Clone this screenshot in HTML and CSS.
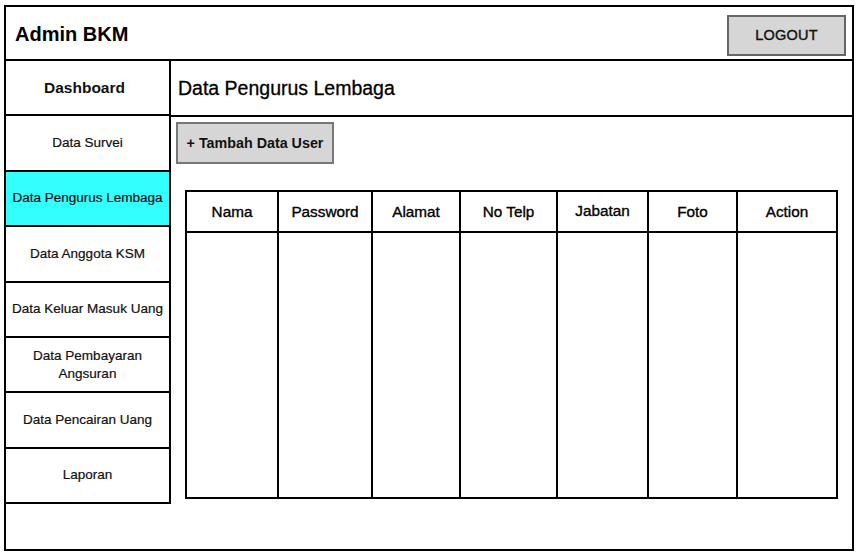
FILE: index.html
```html
<!DOCTYPE html>
<html lang="id">
<head>
    <meta charset="UTF-8">
    <meta name="viewport" content="width=device-width, initial-scale=1.0">
    <title>Admin BKM - Data Pengurus Lembaga</title>
    <link rel="stylesheet" href="styles.css">
</head>
<body>
    <div class="frame">
        <header class="topbar">
            <span class="brand">Admin BKM</span>
            <button class="logout-button">LOGOUT</button>
        </header>

        <div class="main">
            <nav class="sidebar">
                <a class="nav-item nav-head">Dashboard</a>
                <a class="nav-item">Data Survei</a>
                <a class="nav-item active">Data Pengurus Lembaga</a>
                <a class="nav-item">Data Anggota KSM</a>
                <a class="nav-item">Data Keluar Masuk Uang</a>
                <a class="nav-item">Data Pembayaran<br>Angsuran</a>
                <a class="nav-item">Data Pencairan Uang</a>
                <a class="nav-item">Laporan</a>
            </nav>

            <section class="content">
                <div class="page-title">Data Pengurus Lembaga</div>

                <div class="content-body">
                    <button class="add-button">+ Tambah Data User</button>

                    <table class="data-table">
                        <colgroup>
                            <col class="col-nama">
                            <col class="col-password">
                            <col class="col-alamat">
                            <col class="col-telp">
                            <col class="col-jabatan">
                            <col class="col-foto">
                            <col class="col-action">
                        </colgroup>
                        <thead>
                            <tr>
                                <th>Nama</th>
                                <th>Password</th>
                                <th>Alamat</th>
                                <th>No Telp</th>
                                <th class="raised">Jabatan</th>
                                <th>Foto</th>
                                <th>Action</th>
                            </tr>
                        </thead>
                        <tbody>
                            <tr>
                                <td></td>
                                <td></td>
                                <td></td>
                                <td></td>
                                <td></td>
                                <td></td>
                                <td></td>
                            </tr>
                        </tbody>
                    </table>
                </div>
            </section>
        </div>
    </div>
</body>
</html>
```

FILE: styles.css
```css
body {
    margin: 0;
    background-color: #fff;
    color: #000;
    font-family: "Liberation Sans", Arial, sans-serif;
}

/* outer wireframe box */
.frame {
    width: 850px;
    height: 546px;
    margin: 5px 0 0 4px;
    border: 2px solid #000;
    box-sizing: border-box;
    display: flex;
    flex-direction: column;
}

.topbar {
    height: 54px;
    border-bottom: 2px solid #000;
    box-sizing: border-box;
    display: flex;
    align-items: center;
    justify-content: space-between;
    padding: 0 6px 0 9px;
}

.brand {
    font-size: 20px;
    font-weight: bold;
    padding-top: 2px;
}

.logout-button {
    width: 119px;
    height: 41px;
    margin-top: 4px;
    background-color: #d6d6d6;
    border: 2px solid #666;
    font-family: inherit;
    font-size: 14.5px;
    color: #111;
    -webkit-text-stroke: 0.4px #111;
    letter-spacing: 0.2px;
    padding: 0;
}

.main {
    flex: 1;
    display: flex;
    align-items: flex-start;
}

.sidebar {
    width: 163px;
    border-right: 2px solid #000;
    display: flex;
    flex-direction: column;
}

.nav-item {
    height: 55.4px;
    border-bottom: 2px solid #000;
    box-sizing: border-box;
    display: flex;
    align-items: center;
    justify-content: center;
    text-align: center;
    font-size: 13.5px;
    line-height: 18px;
    color: #111;
    -webkit-text-stroke: 0.2px #111;
}

.nav-head {
    font-size: 15.5px;
    font-weight: bold;
    -webkit-text-stroke: 0;
    padding-right: 6px;
}

.nav-item.active {
    background-color: #33ffff;
}

.content {
    flex: 1;
}

.page-title {
    height: 56px;
    border-bottom: 2px solid #000;
    box-sizing: border-box;
    display: flex;
    align-items: center;
    padding-left: 7px;
    font-size: 19.5px;
    -webkit-text-stroke: 0.3px #000;
}

.content-body {
    padding: 5px 0 0 5px;
}

.add-button {
    display: block;
    width: 158px;
    height: 42px;
    background-color: #d6d6d6;
    border: 2px solid #777;
    font-family: inherit;
    font-size: 14.3px;
    font-weight: bold;
    color: #111;
    padding: 0;
}

.data-table {
    width: 651px;
    margin: 26px 0 0 9px;
    border-collapse: collapse;
    table-layout: fixed;
}

.data-table th,
.data-table td {
    border: 2px solid #000;
    padding: 0;
}

.data-table th {
    height: 39px;
    font-size: 15.3px;
    font-weight: normal;
    -webkit-text-stroke: 0.35px #000;
}

.data-table th.raised {
    vertical-align: top;
    padding-top: 10px;
    box-sizing: border-box;
}

.data-table td {
    height: 264px;
}

.col-nama { width: 92px; }
.col-password { width: 94px; }
.col-alamat { width: 88px; }
.col-telp { width: 97px; }
.col-jabatan { width: 91px; }
.col-foto { width: 89px; }
.col-action { width: 100px; }
```
